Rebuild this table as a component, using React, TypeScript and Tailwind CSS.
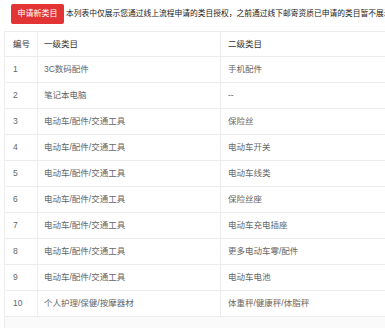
import React from "react";

const rows: [string, string, string][] = [
  ["1", "3C数码配件", "手机配件"],
  ["2", "笔记本电脑", "--"],
  ["3", "电动车/配件/交通工具", "保险丝"],
  ["4", "电动车/配件/交通工具", "电动车开关"],
  ["5", "电动车/配件/交通工具", "电动车线类"],
  ["6", "电动车/配件/交通工具", "保险丝座"],
  ["7", "电动车/配件/交通工具", "电动车充电插座"],
  ["8", "电动车/配件/交通工具", "更多电动车零/配件"],
  ["9", "电动车/配件/交通工具", "电动车电池"],
  ["10", "个人护理/保健/按摩器材", "体重秤/健康秤/体脂秤"],
];

const font = { fontFamily: '"Liberation Sans", "Noto Sans CJK SC", sans-serif' };

const App: React.FC = () => {
  return (
    <div className="w-[385px] h-[328px] overflow-hidden bg-white flex flex-col" style={font}>
      {/* Top bar */}
      <div className="flex items-start h-[31px] pt-[4px] pl-[11px] shrink-0">
        <div className="h-[20px] w-[53px] shrink-0 bg-[#e23434] text-white text-[8px] whitespace-nowrap rounded-[2px] flex items-center justify-center">
          申请新类目
        </div>
        <span className="ml-[2px] mt-[5px] text-[7.75px] leading-[10px] text-[#222] whitespace-nowrap">
          本列表中仅展示您通过线上流程申请的类目授权，之前通过线下邮寄资质已申请的类目暂不展示
        </span>
      </div>

      {/* Table */}
      <div className="ml-[4px] flex-1 border-l border-t border-[#ececec] bg-[#fafafa]">
        <div className="bg-white">
          <div className="grid grid-cols-[33px_183px_1fr] h-[25px] border-b border-[#ececec] text-[8.5px] text-[#333]">
            <div className="border-r border-[#ececec] flex items-center pl-[8px]">编号</div>
            <div className="border-r border-[#ececec] flex items-center pl-[6px]">一级类目</div>
            <div className="flex items-center pl-[7px]">二级类目</div>
          </div>
          {rows.map(([no, first, second]) => (
            <div
              key={no}
              className="grid grid-cols-[33px_183px_1fr] h-[26px] border-b border-[#ececec] text-[8.5px] text-[#666]"
            >
              <div className="border-r border-[#ececec] flex items-center pl-[8px]">{no}</div>
              <div className="border-r border-[#ececec] flex items-center pl-[6px]">{first}</div>
              <div className="flex items-center pl-[7px]">{second}</div>
            </div>
          ))}
        </div>
      </div>
    </div>
  );
};

export default App;
